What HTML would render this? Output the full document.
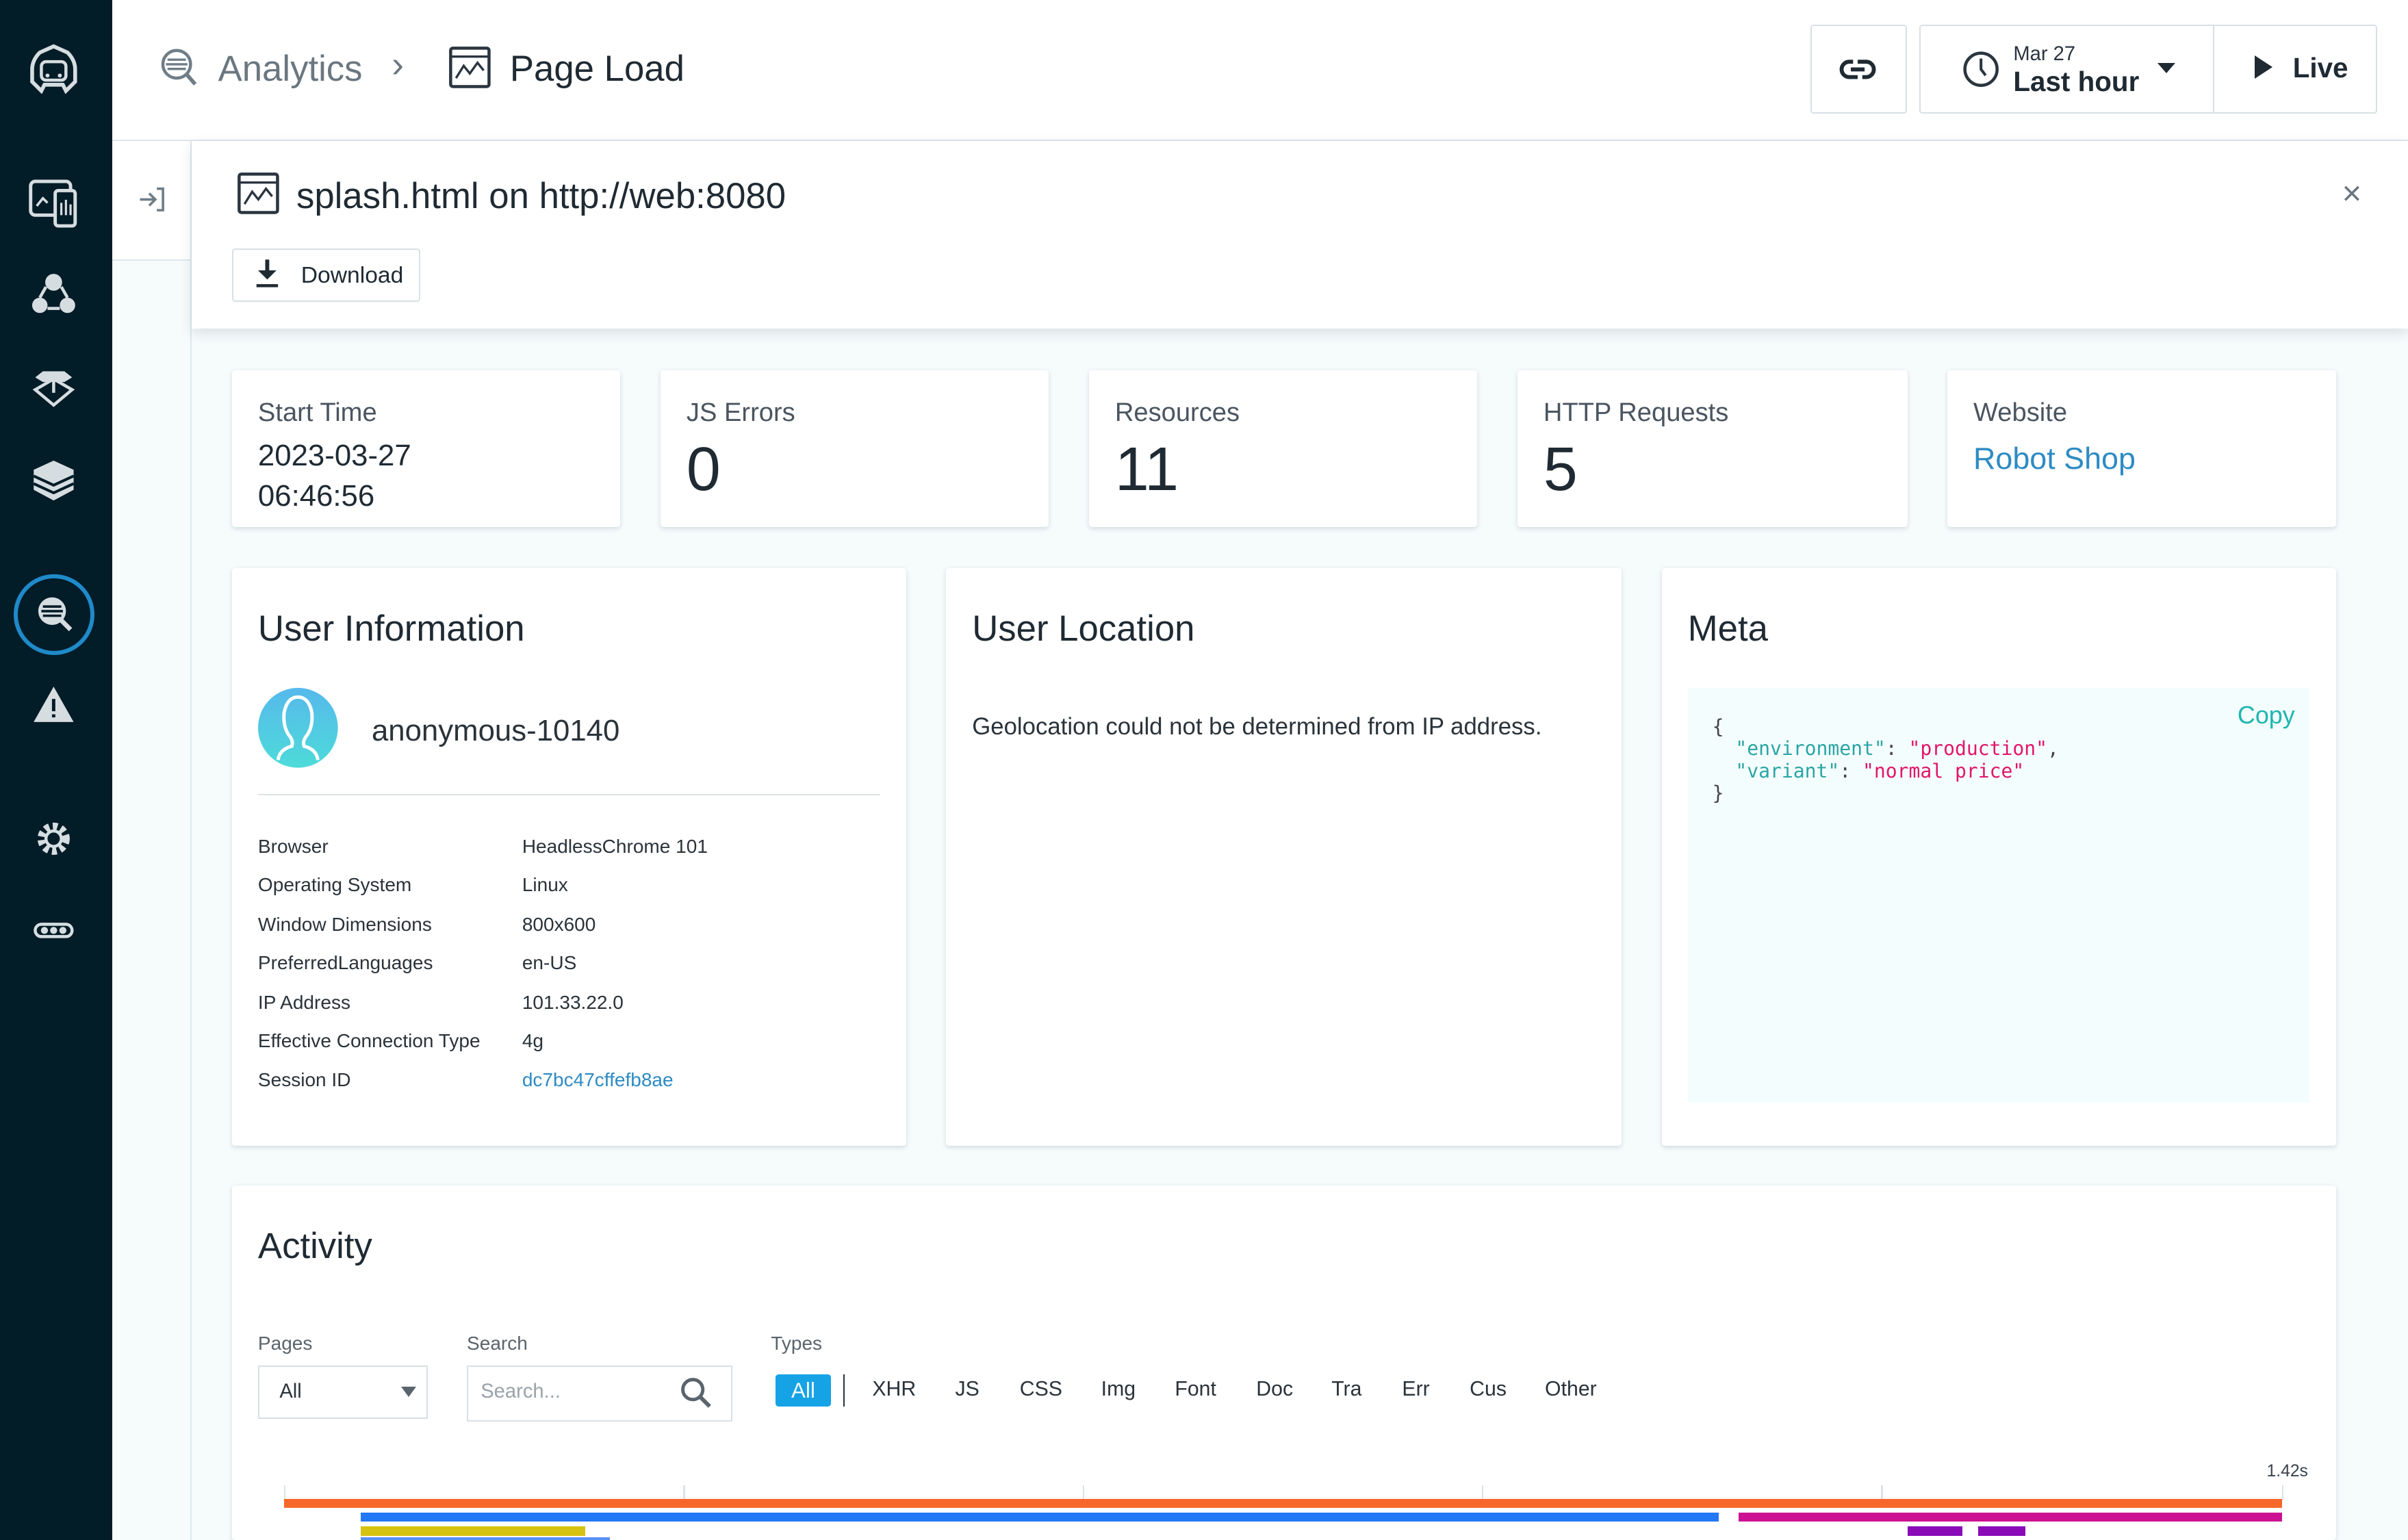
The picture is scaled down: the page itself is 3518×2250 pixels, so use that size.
<!DOCTYPE html>
<html><head><meta charset="utf-8"><style>
html{margin:0;padding:0;width:3518px;height:2250px;overflow:hidden;}
body{margin:0;padding:0;width:1568px;height:1003px;zoom:2.2436;overflow:hidden;position:relative;background:#f6fbfc;font-family:"Liberation Sans",sans-serif;color:#1f2a33;}
.a{position:absolute;}
.card{position:absolute;background:#fff;box-shadow:0 1px 3px rgba(0,40,60,.15);border-radius:2px;}
.sb{left:0;top:0;width:73px;height:1003px;background:#021c28;}
.ic{position:absolute;left:17px;}
.lbl{font-size:17px;color:#4a5560;}
.row{position:absolute;left:17px;font-size:12.5px;color:#2a333a;}
.row span{position:absolute;left:172px;white-space:nowrap;}
.ty{position:absolute;top:897px;font-size:13.5px;color:#2a333a;}
</style></head><body>
<div class="a sb">
 <svg class="ic" style="left:17px;top:27px" width="36" height="36" viewBox="0 0 36 36"><path d="M18 3 L27 7 Q32 12 32 18 L32 26 L26 32 L24 28 L12 28 L10 32 L4 26 L4 18 Q4 12 9 7Z" fill="none" stroke="#d6dde0" stroke-width="2.5"/><rect x="10" y="13" width="16" height="12" rx="3" fill="none" stroke="#d6dde0" stroke-width="2"/><circle cx="14" cy="22" r="1.3" fill="#d6dde0"/><circle cx="22" cy="22" r="1.3" fill="#d6dde0"/></svg>
 <svg class="ic" style="top:114px" width="36" height="36" viewBox="0 0 36 36"><rect x="3" y="4" width="26" height="22" rx="3" fill="none" stroke="#d6dde0" stroke-width="2.2"/><rect x="19" y="10" width="13" height="23" rx="2" fill="#021c28" stroke="#d6dde0" stroke-width="2.2"/><path d="M7 20 L11 15 L14 18" stroke="#d6dde0" stroke-width="1.6" fill="none"/><path d="M23 26V18M26 26V16M29 26V19" stroke="#d6dde0" stroke-width="1.4"/></svg>
 <svg class="ic" style="top:174px" width="36" height="36" viewBox="0 0 36 36"><circle cx="18" cy="10" r="5" fill="#d6dde0" stroke="#d6dde0"/><circle cx="9" cy="25" r="5" fill="#d6dde0"/><circle cx="27" cy="25" r="5" fill="#d6dde0"/><path d="M13 13 L9 20M23 13 L27 20M14 27 L22 27" stroke="#d6dde0" stroke-width="2"/></svg>
 <svg class="ic" style="top:236px" width="36" height="36" viewBox="0 0 36 36"><path d="M11 6 H25 L30 10 L25 13 H11 L6 10Z" fill="#d6dde0"/><path d="M6 18 L18 11 L30 18 L18 28Z" fill="none" stroke="#d6dde0" stroke-width="2"/><path d="M18 12 V20" stroke="#d6dde0" stroke-width="2"/></svg>
 <svg class="ic" style="top:296px" width="36" height="36" viewBox="0 0 36 36"><path d="M18 4 L31 10 V23 L18 30 L5 23 V10Z" fill="#d6dde0"/><path d="M5 14 L18 20 L31 14M5 19 L18 25 L31 19" stroke="#021c28" stroke-width="1.8" fill="none"/></svg>
 <div class="a" style="left:9px;top:374px;width:47px;height:47px;border:3px solid #1f8ac9;border-radius:50%;"></div>
 <svg class="ic" style="top:382px" width="36" height="36" viewBox="0 0 36 36"><circle cx="17" cy="16" r="9" fill="#d6dde0"/><path d="M11 13H23M10 16H24M11 19H23" stroke="#021c28" stroke-width="1.6"/><path d="M23 22 L29 28" stroke="#d6dde0" stroke-width="3"/></svg>
 <svg class="ic" style="top:442px" width="36" height="36" viewBox="0 0 36 36"><path d="M18 5 L31 28 H5Z" fill="#d6dde0"/><path d="M18 13V21M18 23V25" stroke="#021c28" stroke-width="2.2"/></svg>
 <svg class="ic" style="top:528px" width="36" height="36" viewBox="0 0 36 36"><circle cx="18" cy="18" r="8" fill="none" stroke="#d6dde0" stroke-width="5" stroke-dasharray="3 2.3"/><circle cx="18" cy="18" r="5" fill="none" stroke="#d6dde0" stroke-width="2"/></svg>
 <svg class="ic" style="top:588px" width="36" height="36" viewBox="0 0 36 36"><rect x="6" y="14" width="24" height="8" rx="4" fill="none" stroke="#d6dde0" stroke-width="2"/><circle cx="12" cy="18" r="2.3" fill="#d6dde0"/><circle cx="18" cy="18" r="2.3" fill="#d6dde0"/><circle cx="24" cy="18" r="2.3" fill="#d6dde0"/></svg>
</div>
<div class="a" style="left:73px;top:0;width:1495px;height:91px;background:#fff;border-bottom:1px solid #dfe8ec;"></div>
<svg class="a" style="left:102px;top:30px" width="28" height="28" viewBox="0 0 28 28"><circle cx="13" cy="12" r="9" fill="none" stroke="#6f7d87" stroke-width="2"/><path d="M7 9H19M6 12H20M7 15H19" stroke="#6f7d87" stroke-width="1.5"/><path d="M19 18 L25 25" stroke="#6f7d87" stroke-width="2.5"/></svg>
<div class="a" style="left:142px;top:31px;font-size:23.5px;color:#6b7780;">Analytics</div>
<div class="a" style="left:255px;top:28px;font-size:24px;color:#6b7780;">›</div>
<svg class="a" style="left:292px;top:30px" width="28" height="28" viewBox="0 0 28 28"><rect x="1.5" y="1.5" width="25" height="25" rx="1.5" fill="none" stroke="#2b3540" stroke-width="2"/><path d="M1.5 7H26.5" stroke="#2b3540" stroke-width="1.5"/><path d="M5 21 L10 13 L14 18 L19 11 L23 16" fill="none" stroke="#2b3540" stroke-width="1.5"/></svg>
<div class="a" style="left:332px;top:31px;font-size:23.5px;color:#1f2a33;">Page Load</div>
<div class="a" style="left:1179px;top:16px;width:61px;height:56px;border:1px solid #d8e0e4;border-radius:2px;background:#fff;"></div>
<svg class="a" style="left:1197px;top:35px" width="26" height="20" viewBox="0 0 26 20"><rect x="2" y="5" width="21" height="10" rx="5" fill="none" stroke="#1f2a33" stroke-width="2.6"/><path d="M8 10H17" stroke="#1f2a33" stroke-width="2.6"/><path d="M11 3V7M14 13V17" stroke="#fff" stroke-width="3"/></svg>
<div class="a" style="left:1250px;top:16px;width:296px;height:56px;border:1px solid #d8e0e4;border-radius:2px;background:#fff;"></div>
<div class="a" style="left:1441px;top:16px;width:1px;height:58px;background:#d8e0e4;"></div>
<svg class="a" style="left:1277px;top:32px" width="26" height="26" viewBox="0 0 26 26"><circle cx="13" cy="13" r="10.5" fill="none" stroke="#2b3540" stroke-width="2"/><path d="M13 6V13L16 17" fill="none" stroke="#2b3540" stroke-width="1.8"/></svg>
<div class="a" style="left:1311px;top:28px;font-size:13px;color:#2b3540;">Mar 27</div>
<div class="a" style="left:1311px;top:43px;font-size:18px;font-weight:bold;color:#1f2a33;">Last hour</div>
<div class="a" style="left:1405px;top:41px;width:0;height:0;border-left:6px solid transparent;border-right:6px solid transparent;border-top:7px solid #1f2a33;"></div>
<div class="a" style="left:1468px;top:36px;width:0;height:0;border-top:8px solid transparent;border-bottom:8px solid transparent;border-left:12px solid #1f2a33;"></div>
<div class="a" style="left:1493px;top:34px;font-size:18px;font-weight:bold;color:#1f2a33;">Live</div>
<div class="a" style="left:73px;top:92px;width:51px;height:911px;background:#f6fbfc;border-right:1px solid #dfe8ec;"></div>
<div class="a" style="left:73px;top:92px;width:51px;height:77px;background:#fff;border-bottom:1px solid #dfe8ec;"></div>
<svg class="a" style="left:89px;top:120px" width="20" height="20" viewBox="0 0 20 20"><path d="M2 10H11M8 6L12 10L8 14" fill="none" stroke="#6f7d87" stroke-width="1.6"/><path d="M13 3H17V17H13" fill="none" stroke="#6f7d87" stroke-width="1.6"/></svg>
<div class="a" style="left:125px;top:92px;width:1443px;height:122px;background:#fff;box-shadow:0 3px 8px rgba(0,40,60,.12);"></div>
<svg class="a" style="left:154px;top:112px" width="28" height="28" viewBox="0 0 28 28"><rect x="1.5" y="1.5" width="25" height="25" rx="1.5" fill="none" stroke="#2b3540" stroke-width="2"/><path d="M1.5 7H26.5" stroke="#2b3540" stroke-width="1.5"/><path d="M5 21 L10 13 L14 18 L19 11 L23 16" fill="none" stroke="#2b3540" stroke-width="1.5"/></svg>
<div class="a" style="left:193px;top:114px;font-size:23.5px;color:#1f2a33;">splash.html on http://web:8080</div>
<div class="a" style="left:1525px;top:113px;font-size:22px;color:#6b7780;">×</div>
<div class="a" style="left:151px;top:162px;width:121px;height:33px;border:1px solid #d8e0e4;border-radius:2px;background:#fff;"></div>
<svg class="a" style="left:164px;top:168px" width="20" height="20" viewBox="0 0 20 20"><path d="M10 1V12" stroke="#1f2a33" stroke-width="2.6"/><path d="M4 8L10 14L16 8Z" fill="#1f2a33"/><path d="M3 18H17" stroke="#1f2a33" stroke-width="2"/></svg>
<div class="a" style="left:196px;top:171px;font-size:15px;color:#1f2a33;">Download</div>
<div class="card" style="left:151px;top:241px;width:253px;height:102px;"><div class="a lbl" style="left:17px;top:18px;">Start Time</div><div class="a" style="left:17px;top:43px;font-size:19.5px;line-height:26px;color:#1f2a33;">2023-03-27<br>06:46:56</div></div>
<div class="card" style="left:430px;top:241px;width:253px;height:102px;"><div class="a lbl" style="left:17px;top:18px;">JS Errors</div><div class="a" style="left:17px;top:42px;font-size:40px;color:#1f2a33;">0</div></div>
<div class="card" style="left:709px;top:241px;width:253px;height:102px;"><div class="a lbl" style="left:17px;top:18px;">Resources</div><div class="a" style="left:17px;top:42px;font-size:40px;color:#1f2a33;">11</div></div>
<div class="card" style="left:988px;top:241px;width:254px;height:102px;"><div class="a lbl" style="left:17px;top:18px;">HTTP Requests</div><div class="a" style="left:17px;top:42px;font-size:40px;color:#1f2a33;">5</div></div>
<div class="card" style="left:1268px;top:241px;width:253px;height:102px;"><div class="a lbl" style="left:17px;top:18px;">Website</div><div class="a" style="left:17px;top:46px;font-size:20px;color:#2d8bc3;">Robot Shop</div></div>
<div class="card" style="left:151px;top:370px;width:439px;height:376px;">
 <div class="a" style="left:17px;top:26px;font-size:23.5px;color:#1f2a33;">User Information</div>
 <svg class="a" style="left:17px;top:78px" width="52" height="52" viewBox="0 0 52 52"><defs><linearGradient id="g" x1="0" y1="0" x2="0" y2="1"><stop offset="0" stop-color="#56b9ec"/><stop offset="1" stop-color="#4ddbd9"/></linearGradient></defs><circle cx="26" cy="26" r="26" fill="url(#g)"/><path d="M13 47 Q14 40 22 38 Q23 35 21 32 Q16 26 17 16 Q19 6 26 6 Q33 6 35 16 Q36 26 31 32 Q29 35 30 38 Q38 40 39 47" fill="none" stroke="#fff" stroke-width="2.2"/></svg>
 <div class="a" style="left:91px;top:95px;font-size:19.5px;color:#2a333a;">anonymous-10140</div>
 <div class="a" style="left:17px;top:147px;width:405px;height:1px;background:#dde2e5;"></div>
 <div class="row" style="top:174px">Browser<span>HeadlessChrome 101</span></div>
 <div class="row" style="top:199px">Operating System<span>Linux</span></div>
 <div class="row" style="top:225px">Window Dimensions<span>800x600</span></div>
 <div class="row" style="top:250px">PreferredLanguages<span>en-US</span></div>
 <div class="row" style="top:276px">IP Address<span>101.33.22.0</span></div>
 <div class="row" style="top:301px">Effective Connection Type<span>4g</span></div>
 <div class="row" style="top:326px">Session ID<span style="color:#2d8bc3">dc7bc47cffefb8ae</span></div>
</div>
<div class="card" style="left:616px;top:370px;width:440px;height:376px;">
 <div class="a" style="left:17px;top:26px;font-size:23.5px;color:#1f2a33;">User Location</div>
 <div class="a" style="left:17px;top:95px;font-size:15.5px;color:#2a333a;">Geolocation could not be determined from IP address.</div>
</div>
<div class="card" style="left:1082px;top:370px;width:439px;height:376px;">
 <div class="a" style="left:17px;top:26px;font-size:23.5px;color:#1f2a33;">Meta</div>
 <div class="a" style="left:17px;top:78px;width:405px;height:270px;background:#f4fdfd;"></div>
 <div class="a" style="left:375px;top:87px;font-size:16px;color:#1db6b0;">Copy</div>
 <pre class="a" style="left:33px;top:96px;margin:0;font-family:'DejaVu Sans Mono',monospace;font-size:12.5px;line-height:14.5px;color:#444;">{
  <span style="color:#2ba5a5">"environment"</span>: <span style="color:#e2156b">"production"</span>,
  <span style="color:#2ba5a5">"variant"</span>: <span style="color:#e2156b">"normal price"</span>
}</pre>
</div>
<div class="card" style="left:151px;top:772px;width:1370px;height:231px;">
 <div class="a" style="left:17px;top:26px;font-size:23.5px;color:#1f2a33;">Activity</div>
 <div class="a" style="left:17px;top:96px;font-size:12.5px;color:#5a646c;">Pages</div>
 <div class="a" style="left:153px;top:96px;font-size:12.5px;color:#5a646c;">Search</div>
 <div class="a" style="left:351px;top:96px;font-size:12.5px;color:#5a646c;">Types</div>
 <div class="a" style="left:17px;top:117px;width:109px;height:33px;border:1px solid #d8e0e4;"></div>
 <div class="a" style="left:31px;top:127px;font-size:13px;color:#2a333a;">All</div>
 <div class="a" style="left:110px;top:131px;width:0;height:0;border-left:5px solid transparent;border-right:5px solid transparent;border-top:7px solid #5a646c;"></div>
 <div class="a" style="left:153px;top:117px;width:171px;height:35px;border:1px solid #d8e0e4;"></div>
 <div class="a" style="left:162px;top:127px;font-size:13px;color:#9aa3a9;">Search...</div>
 <svg class="a" style="left:291px;top:124px" width="22" height="22" viewBox="0 0 22 22"><circle cx="9" cy="9" r="6.5" fill="none" stroke="#5a646c" stroke-width="2.2"/><path d="M14 14L20 20" stroke="#5a646c" stroke-width="2.6"/></svg>
</div>
<div class="a" style="left:505px;top:895px;width:36px;height:21px;background:#15a3e6;border-radius:2px;color:#fff;font-size:14px;text-align:center;line-height:21px;">All</div>
<div class="a" style="left:549px;top:895px;width:1px;height:21px;background:#2a333a;"></div>
<div class="ty" style="left:568px">XHR</div><div class="ty" style="left:622px">JS</div><div class="ty" style="left:664px">CSS</div><div class="ty" style="left:717px">Img</div><div class="ty" style="left:765px">Font</div><div class="ty" style="left:818px">Doc</div><div class="ty" style="left:867px">Tra</div><div class="ty" style="left:913px">Err</div><div class="ty" style="left:957px">Cus</div><div class="ty" style="left:1006px">Other</div>
<div class="a" style="left:1476px;top:952px;font-size:11px;color:#3a444c;">1.42s</div>
<div class="a" style="left:185px;top:967px;width:1px;height:10px;background:#dde2e5;"></div>
<div class="a" style="left:445px;top:967px;width:1px;height:10px;background:#dde2e5;"></div>
<div class="a" style="left:705px;top:967px;width:1px;height:10px;background:#dde2e5;"></div>
<div class="a" style="left:965px;top:967px;width:1px;height:10px;background:#dde2e5;"></div>
<div class="a" style="left:1225px;top:967px;width:1px;height:10px;background:#dde2e5;"></div>
<div class="a" style="left:1486px;top:967px;width:1px;height:10px;background:#dde2e5;"></div>
<div class="a" style="left:185px;top:976px;width:1301px;height:6px;background:#f5672b;"></div>
<div class="a" style="left:235px;top:985px;width:884px;height:6px;background:#2378f5;"></div>
<div class="a" style="left:1132px;top:985px;width:354px;height:6px;background:#cc1192;"></div>
<div class="a" style="left:235px;top:994px;width:146px;height:6px;background:#d6c210;"></div>
<div class="a" style="left:1242px;top:994px;width:36px;height:6px;background:#8a0bb8;"></div>
<div class="a" style="left:1288px;top:994px;width:31px;height:6px;background:#8a0bb8;"></div>
<div class="a" style="left:235px;top:1001px;width:162px;height:2px;background:#5a8ef5;"></div>
</body></html>
